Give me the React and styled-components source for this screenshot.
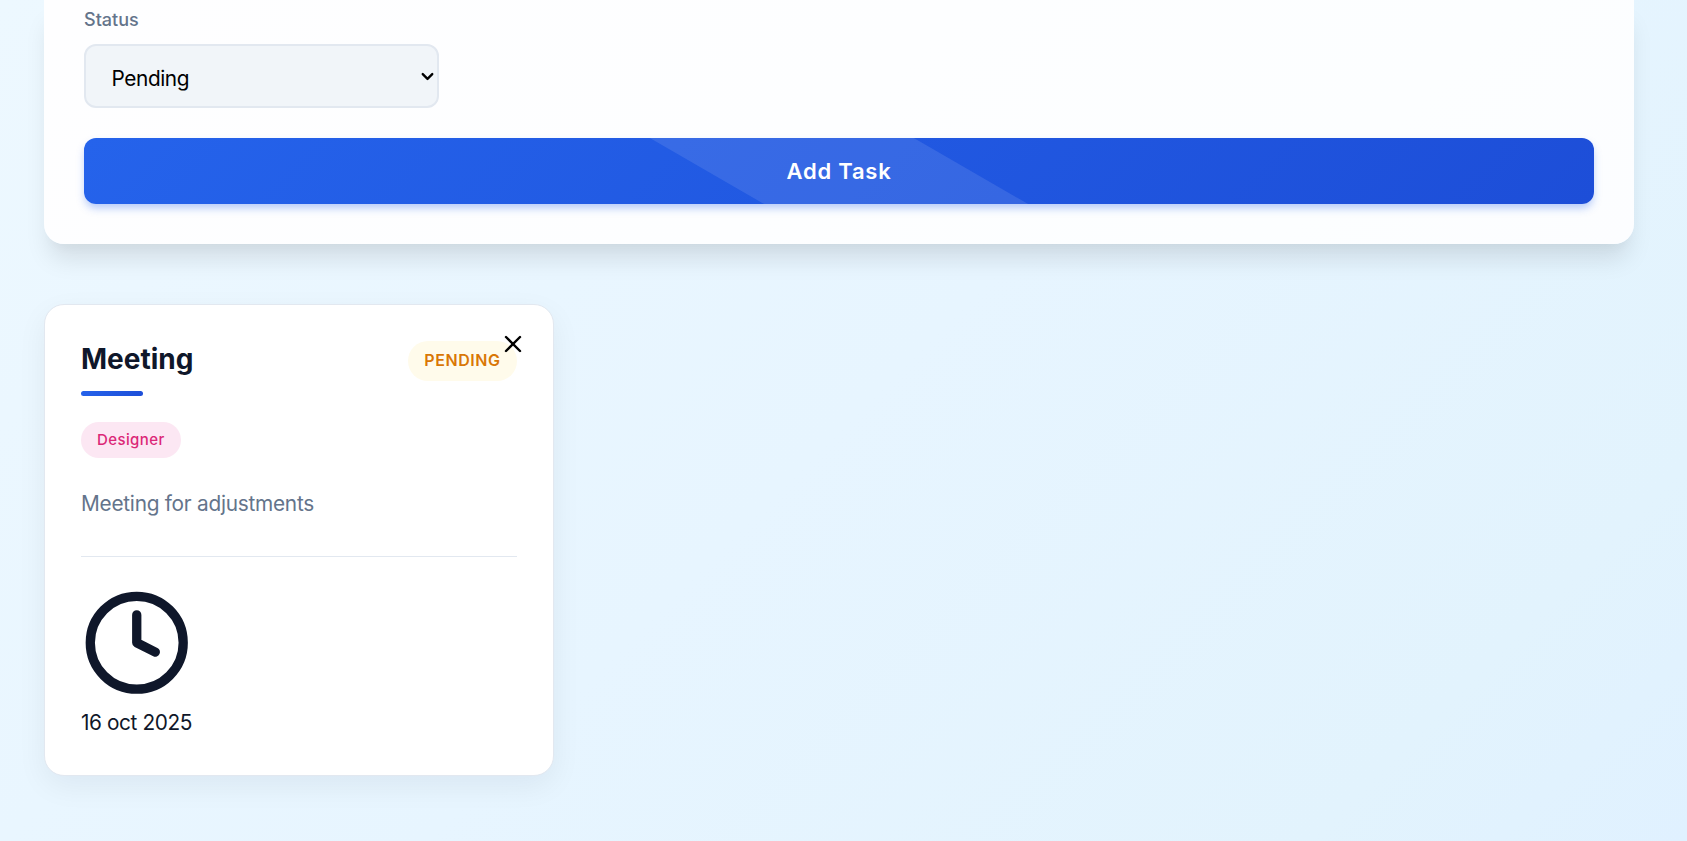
import React from "react";
import styled, { createGlobalStyle } from "styled-components";
import { ChevronDown, Clock, X } from "lucide-react";

const GlobalStyle = createGlobalStyle`
  *, *::before, *::after { box-sizing: border-box; }
  body {
    margin: 0;
    font-family: Inter, "Liberation Sans", sans-serif;
    font-size: 20px;
    line-height: 1.6;
    color: #0f172a;
  }
  button, select { font-family: inherit; }
`;

const Page = styled.main`
  height: 841px;
  overflow: hidden;
  padding: 0 53px 0 44px;
  background: linear-gradient(135deg, #edf8ff 0%, #e7f5ff 50%, #e2f3fd 85%, #e0f1ff 100%);
`;

const FormPanel = styled.form`
  height: 244px;
  padding: 4px 40px 40px;
  border-radius: 0 0 20px 20px;
  background: linear-gradient(135deg, #fefeff 0%, #fdfeff 50%, #fcfeff 80%, #fcfdff 100%);
  box-shadow: 0 20px 25px -5px rgba(0, 0, 0, 0.1), 0 10px 10px -5px rgba(0, 0, 0, 0.025);
`;

const Field = styled.div`
  display: flex;
  flex-direction: column;
  width: 355px;
  margin-bottom: 30px;
`;

const Label = styled.label`
  height: 32px;
  margin-bottom: 8px;
  font-size: 18px;
  font-weight: 500;
  line-height: 32px;
  color: #64748b;
`;

const SelectBox = styled.div`
  position: relative;
  display: flex;

  svg {
    position: absolute;
    top: 23px;
    right: 2px;
    pointer-events: none;
    color: #000;
  }
`;

const Select = styled.select`
  width: 100%;
  height: 64px;
  padding: 4px 25.5px 0;
  appearance: none;
  border: 2px solid #e2e8f0;
  border-radius: 12px;
  background: #f1f5f9;
  font-size: 20.8px;
  letter-spacing: -0.4px;
  color: #000;
`;

const SubmitButton = styled.button`
  position: relative;
  display: block;
  width: 100%;
  height: 66px;
  overflow: hidden;
  border: 0;
  border-radius: 12px;
  background: linear-gradient(135deg, #2563eb, #1d4ed8);
  box-shadow: 0 5px 9px -1px rgba(37, 99, 235, 0.34);
  font-size: 22px;
  font-weight: 600;
  letter-spacing: 0.75px;
  color: #fff;

  &::after {
    content: "";
    position: absolute;
    top: 0;
    left: 623px;
    width: 264px;
    height: 100%;
    transform: skewX(60deg);
    background: rgba(255, 255, 255, 0.1);
  }
`;

const TaskGrid = styled.section`
  display: grid;
  grid-template-columns: repeat(3, 510px);
  gap: 30px;
  margin-top: 60px;
`;

const TaskCard = styled.article`
  position: relative;
  height: 472px;
  padding: 36px;
  border: 1px solid #e2e8f0;
  border-radius: 20px;
  background: #fff;
  box-shadow: 0 10px 30px rgba(15, 23, 42, 0.06);
`;

const CardHeader = styled.header`
  display: flex;
  justify-content: space-between;
  height: 55px;
`;

const Title = styled.h3`
  position: relative;
  margin: 0;
  font-size: 28px;
  font-weight: 700;
  line-height: 37px;

  &::after {
    content: "";
    position: absolute;
    top: 50px;
    left: 0;
    width: 62px;
    height: 5px;
    border-radius: 3px;
    background: linear-gradient(135deg, #2563eb, #1d4ed8);
  }
`;

const StatusBadge = styled.span`
  height: 40px;
  padding: 0 16.3px 0 16px;
  border-radius: 20px;
  background: #fffbeb;
  font-size: 16px;
  font-weight: 600;
  line-height: 39px;
  letter-spacing: 0.6px;
  text-transform: uppercase;
  color: #d97706;
`;

const RoleTag = styled.span`
  display: block;
  width: fit-content;
  height: 36px;
  margin-top: 26px;
  padding: 0 16.7px 0 16px;
  border-radius: 18px;
  background: #fce7f3;
  font-size: 15px;
  font-weight: 500;
  line-height: 36px;
  letter-spacing: 0.4px;
  color: #db2777;
`;

const Description = styled.p`
  margin: 28px 0 0;
  line-height: 36px;
  font-size: 20.8px;
  letter-spacing: -0.25px;
  color: #64748b;
`;

const CardFooter = styled.footer`
  display: flex;
  flex-direction: column;
  margin-top: 34px;
  padding-top: 29.5px;
  border-top: 1px solid #e2e8f0;
`;

const DateIcon = styled(Clock)`
  margin-left: -0.3px;
`;

const DueDate = styled.time`
  margin-top: 7px;
  line-height: 36px;
  font-size: 20.8px;
  letter-spacing: -0.4px;
`;

const CloseButton = styled.button`
  position: absolute;
  top: 25px;
  right: 26px;
  display: flex;
  padding: 0;
  border: 0;
  background: none;
  color: #000;
`;

export default function App() {
  return (
    <>
      <GlobalStyle />
      <Page>
        <FormPanel onSubmit={(e) => e.preventDefault()}>
          <Field>
            <Label htmlFor="status">Status</Label>
            <SelectBox>
              <Select id="status" defaultValue="Pending">
                <option>Pending</option>
                <option>Completed</option>
              </Select>
              <ChevronDown size={19} strokeWidth={3} />
            </SelectBox>
          </Field>
          <SubmitButton type="submit">Add Task</SubmitButton>
        </FormPanel>
        <TaskGrid>
          <TaskCard>
            <CardHeader>
              <Title>Meeting</Title>
              <StatusBadge>Pending</StatusBadge>
            </CardHeader>
            <RoleTag>Designer</RoleTag>
            <Description>Meeting for adjustments</Description>
            <CardFooter>
              <DateIcon size={111.5} />
              <DueDate>16 oct 2025</DueDate>
            </CardFooter>
            <CloseButton type="button" aria-label="Delete task">
              <X size={28} strokeWidth={2.1} />
            </CloseButton>
          </TaskCard>
        </TaskGrid>
      </Page>
    </>
  );
}
